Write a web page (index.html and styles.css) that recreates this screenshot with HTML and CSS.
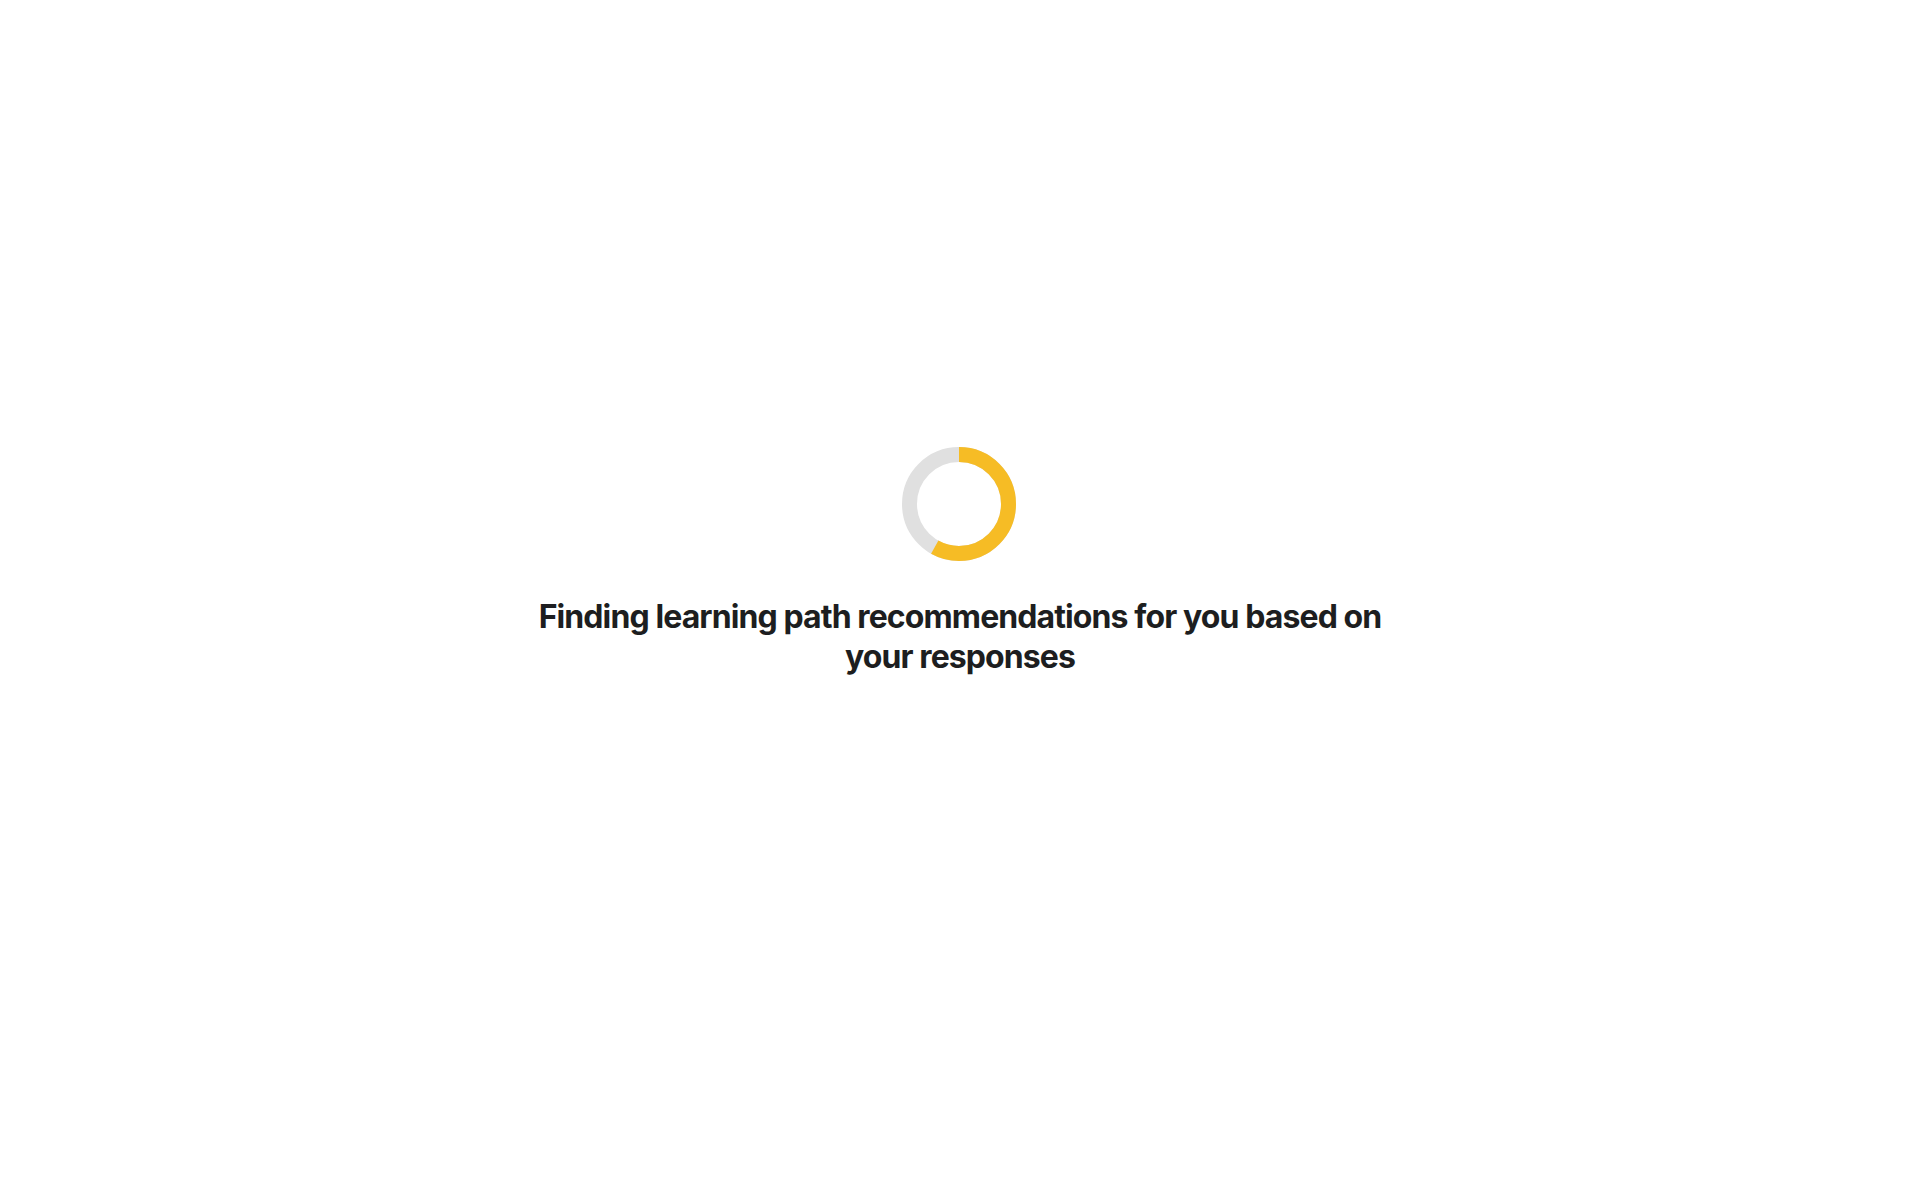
FILE: index.html
```html
<!DOCTYPE html>
<html lang="en">
<head>
<meta charset="utf-8">
<title>Finding recommendations</title>
<link rel="stylesheet" href="styles.css">
</head>
<body>
<main class="loading">
  <svg class="spinner" viewBox="0 0 114 114" width="114" height="114" aria-hidden="true">
    <circle class="track" cx="57" cy="57" r="49.5"/>
    <circle class="arc" cx="57" cy="57" r="49.5" transform="rotate(-90 57 57)"/>
  </svg>
  <h1 class="title">Finding learning path recommendations for you based on your responses</h1>
</main>
</body>
</html>
```
FILE: styles.css
```css
html, body {
  margin: 0;
  padding: 0;
  background: #ffffff;
}
body {
  font-family: Inter, "Noto Sans", sans-serif;
  color: #1d1e20;
}
.loading {
  display: flex;
  flex-direction: column;
  align-items: center;
  padding-top: 447px;
}
.spinner {
  display: block;
  margin-right: 3px;
}
.track {
  fill: none;
  stroke: #e0e0e0;
  stroke-width: 15;
}
.arc {
  fill: none;
  stroke: #f6bc25;
  stroke-width: 15;
  stroke-dasharray: 180.6 400;
}
.title {
  margin: 36px 0 0;
  max-width: 880px;
  text-align: center;
  font-size: 32px;
  line-height: 40px;
  font-weight: 700;
  letter-spacing: -0.9px;
}
```
